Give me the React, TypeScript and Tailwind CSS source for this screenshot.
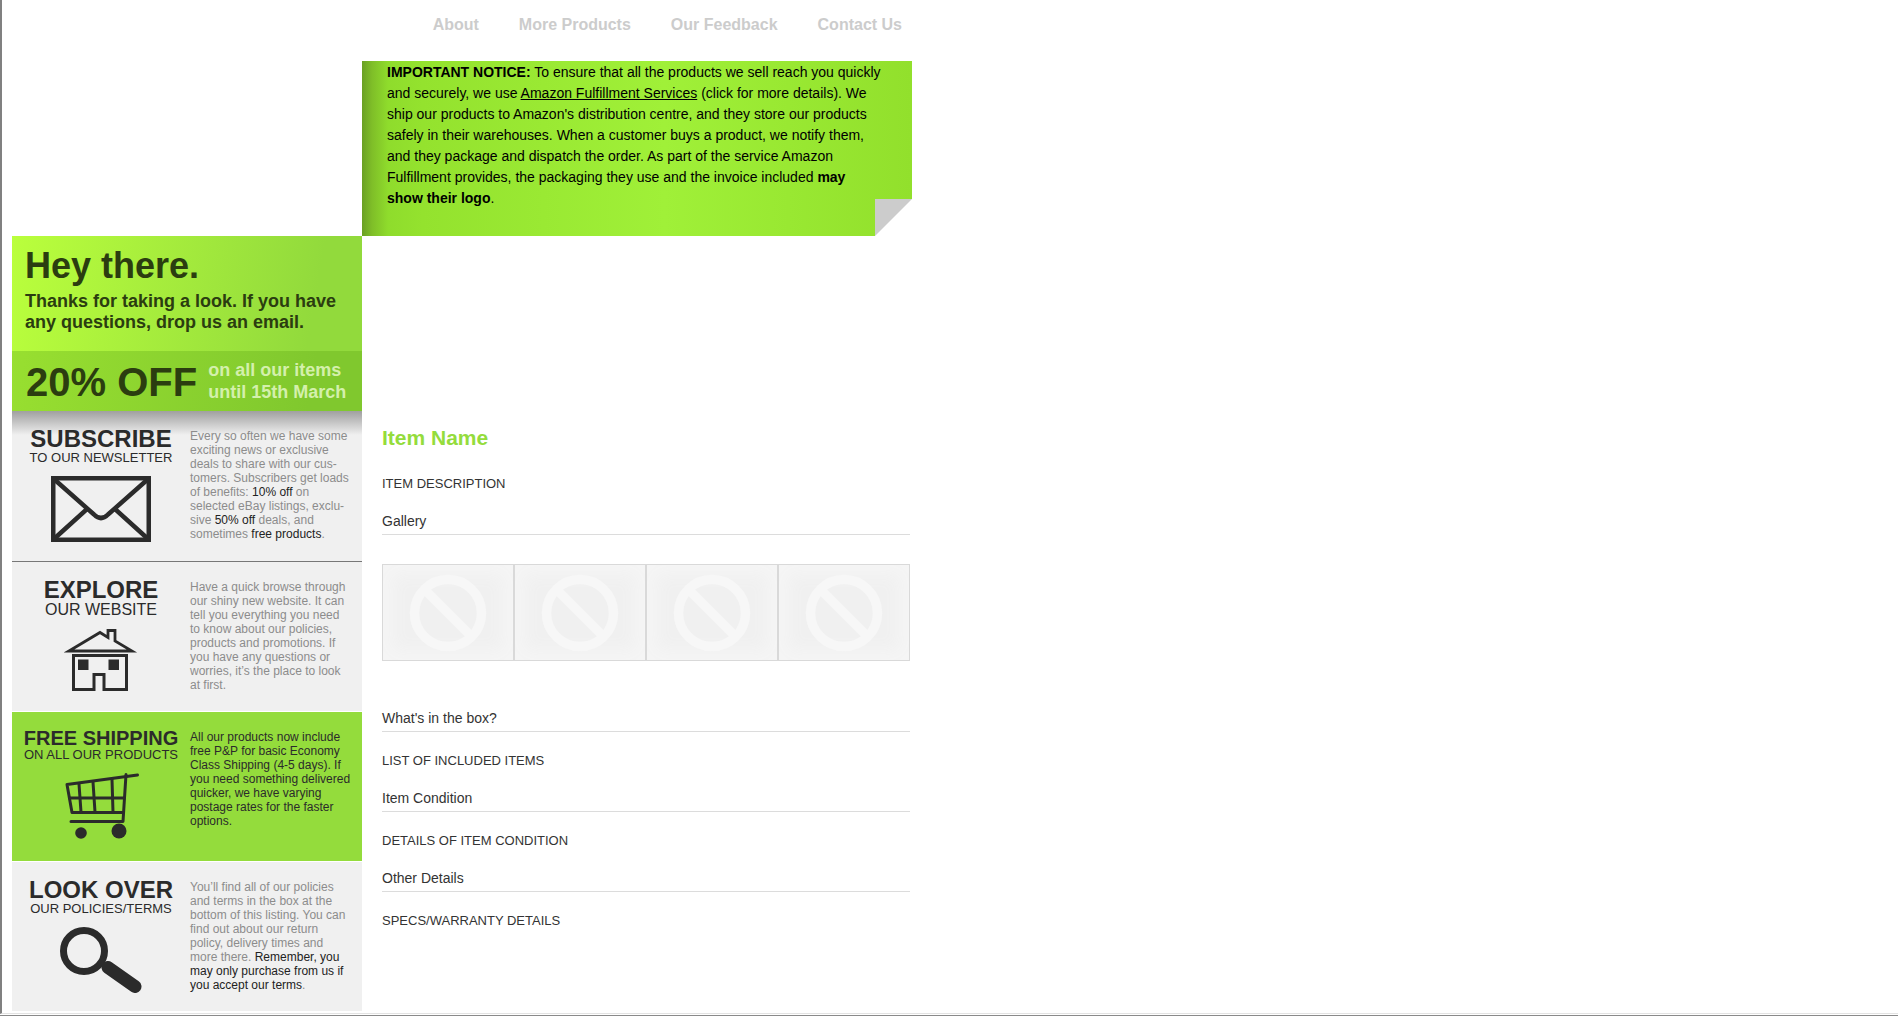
import type { ReactNode } from "react";

const navLinks = ["About", "More Products", "Our Feedback", "Contact Us"];

const sections = [
  { title: "What's in the box?", body: "LIST OF INCLUDED ITEMS" },
  { title: "Item Condition", body: "DETAILS OF ITEM CONDITION" },
  { title: "Other Details", body: "SPECS/WARRANTY DETAILS" },
];

function EnvelopeIcon() {
  return (
    <svg width="100" height="66" viewBox="0 0 100 66" fill="none" stroke="#2b2b2b" aria-hidden="true">
      <rect x="2.25" y="2.25" width="95.5" height="61.5" strokeWidth="4.5" />
      <path d="M4 4 L43 38.5 Q50 45.5 57 38.5 L96 4" strokeWidth="4.5" />
      <path d="M4 62 L36 33 M96 62 L64 33" strokeWidth="4.5" />
    </svg>
  );
}

function HouseIcon() {
  return (
    <svg width="74" height="62" viewBox="0 0 74 62" fill="none" stroke="#2b2b2b" aria-hidden="true">
      <path d="M5 22 L36 3.5 L44 8.5 V1.5 H51 V12 L68 22 Z" strokeWidth="2.8" />
      <path d="M9.5 26.5 H62.5 V60.5 H40 V45.5 H30 V60.5 H9.5 Z" strokeWidth="3" />
      <path d="M14 30.5 H24.5 V41 H14 Z M44.5 30.5 H55 V41 H44.5 Z" fill="#2b2b2b" stroke="none" />
    </svg>
  );
}

function CartIcon() {
  return (
    <svg width="80" height="66" viewBox="-4 0 80 66" fill="none" stroke="#2b2b2b" strokeLinecap="round" strokeLinejoin="round" aria-hidden="true">
      <path d="M72.5 2 L2 11.5 L7 39.5 H58.5" strokeWidth="3" />
      <path d="M61 1.5 L58 48.5 H6" strokeWidth="3" />
      <path d="M14 11 L16 39 M28 9 L30 39 M47 6.5 L48 39 M4.5 25 H59" strokeWidth="3" />
      <circle cx="16" cy="60" r="5.8" fill="#2b2b2b" stroke="none" />
      <circle cx="54" cy="58" r="7.5" fill="#2b2b2b" stroke="none" />
    </svg>
  );
}

function MagnifierIcon() {
  return (
    <svg width="82" height="66" viewBox="0 0 82 66" fill="none" stroke="#2b2b2b" aria-hidden="true">
      <circle cx="24" cy="24" r="20.5" strokeWidth="7" />
      <path d="M48 40.5 L75 59.5" strokeWidth="13" strokeLinecap="round" />
    </svg>
  );
}

type PromoCardProps = {
  title: string;
  subtitle: string;
  titleClass: string;
  subtitleClass: string;
  className: string;
  icon: ReactNode;
  children: ReactNode;
};

function PromoCard({ title, subtitle, titleClass, subtitleClass, className, icon, children }: PromoCardProps) {
  return (
    <section className={`flex border-b text-xs leading-[14px] ${className}`}>
      <div className="flex w-[178px] shrink-0 flex-col items-center pt-[17px] text-[#2b2b2b]">
        <h2 className={`whitespace-nowrap font-bold ${titleClass}`}>{title}</h2>
        <p className={`whitespace-nowrap ${subtitleClass}`}>{subtitle}</p>
        <div className="mt-[10px]">{icon}</div>
      </div>
      <p className="whitespace-nowrap pt-[18px]">{children}</p>
    </section>
  );
}

function PlaceholderImage() {
  return (
    <div className="flex h-[97px] flex-1 items-center justify-center border border-[#d9d9d9] bg-[#f0f0f0] shadow-[inset_0_0_16px_10px_#f5f5f5]">
      <svg width="78" height="78" viewBox="0 0 78 78" fill="none" stroke="#f7f7f7" strokeWidth="9.5" aria-hidden="true">
        <circle cx="39" cy="39" r="33.5" />
        <path d="M16 16 L62 62" />
      </svg>
    </div>
  );
}

function SectionTitle({ children }: { children: ReactNode }) {
  return <h3 className="border-b border-[#dcdcdc] pt-px pb-[3px] text-sm leading-5">{children}</h3>;
}

export default function App() {
  return (
    <div className="min-h-screen border-b border-[#8a8a8a] bg-white pb-px font-['Liberation_Sans',Arial,sans-serif]">
      <div className="flex items-start border-b border-l-2 border-b-[#e3e3e3] border-l-[#808080] pb-px pl-[10px]">
        <aside className="mt-[236px] w-[350px] shrink-0">
          <div className="h-[115px] bg-linear-100 from-[#baff3c] to-[#92da3c] to-85% px-[13px] pt-[9px] font-bold text-[#2b3d10]">
            <h1 className="text-4xl leading-[42px]">Hey there.</h1>
            <p className="whitespace-nowrap pt-1 text-lg leading-[21px]">
              Thanks for taking a look. If you have
              <br />
              any questions, drop us an email.
            </p>
          </div>
          <div className="flex h-[60px] items-center gap-[11px] bg-linear-100 from-[#98df30] to-[#80c82e] to-85% px-[14px] font-bold">
            <strong className="whitespace-nowrap pt-0.5 text-[40px] leading-10 text-[#2b3d10]">20% OFF</strong>
            <p className="whitespace-nowrap text-lg leading-[22px] text-[#d4f0ac]">
              on all our items
              <br />
              until 15th March
            </p>
          </div>

          <PromoCard
            title="SUBSCRIBE"
            subtitle="TO OUR NEWSLETTER"
            titleClass="text-2xl leading-[22px]"
            subtitleClass="text-[13px] leading-4"
            className="h-[151px] border-[#777777] bg-[#f0f0f0] bg-linear-to-b from-[#a0a0a0] to-[#f0f0f0] to-[24px] text-[#8c8c8c]"
            icon={<EnvelopeIcon />}
          >
            Every so often we have some
            <br />
            exciting news or exclusive
            <br />
            deals to share with our cus-
            <br />
            tomers. Subscribers get loads
            <br />
            of benefits: <span className="text-[#222222]">10% off</span> on
            <br />
            selected eBay listings, exclu-
            <br />
            sive <span className="text-[#222222]">50% off</span> deals, and
            <br />
            sometimes <span className="text-[#222222]">free products</span>.
          </PromoCard>

          <PromoCard
            title="EXPLORE"
            subtitle="OUR WEBSITE"
            titleClass="text-2xl leading-[22px]"
            subtitleClass="text-base leading-[18px]"
            className="h-[150px] border-white bg-[#f0f0f0] text-[#8c8c8c]"
            icon={<HouseIcon />}
          >
            Have a quick browse through
            <br />
            our shiny new website. It can
            <br />
            tell you everything you need
            <br />
            to know about our policies,
            <br />
            products and promotions. If
            <br />
            you have any questions or
            <br />
            worries, it’s the place to look
            <br />
            at first.
          </PromoCard>

          <PromoCard
            title="FREE SHIPPING"
            subtitle="ON ALL OUR PRODUCTS"
            titleClass="text-xl leading-[18px]"
            subtitleClass="text-[13px] leading-4"
            className="h-[150px] border-white bg-[#94dc3c] text-[#2b2b2b]"
            icon={<CartIcon />}
          >
            All our products now include
            <br />
            free P&amp;P for basic Economy
            <br />
            Class Shipping (4-5 days). If
            <br />
            you need something delivered
            <br />
            quicker, we have varying
            <br />
            postage rates for the faster
            <br />
            options.
          </PromoCard>

          <PromoCard
            title="LOOK OVER"
            subtitle="OUR POLICIES/TERMS"
            titleClass="text-2xl leading-[22px]"
            subtitleClass="text-[13px] leading-4"
            className="h-[150px] border-white bg-[#f0f0f0] text-[#8c8c8c]"
            icon={<MagnifierIcon />}
          >
            You’ll find all of our policies
            <br />
            and terms in the box at the
            <br />
            bottom of this listing. You can
            <br />
            find out about our return
            <br />
            policy, delivery times and
            <br />
            more there. <span className="text-[#222222]">Remember, you</span>
            <br />
            <span className="text-[#222222]">may only purchase from us if</span>
            <br />
            <span className="text-[#222222]">you accept our terms</span>.
          </PromoCard>
        </aside>

        <main className="w-[550px] shrink-0 text-[#333333]">
          <nav className="flex h-[61px] justify-end gap-10 pr-[10px] pt-[13px] text-base font-bold text-[#cccccc]">
            {navLinks.map((link) => (
              <a key={link} href="#" className="whitespace-nowrap">
                {link}
              </a>
            ))}
          </nav>

          <div className="relative h-[175px] bg-[linear-gradient(to_right,#6aa024_0,#7fbe28_10px,#8fdc2c_26px,#94e22e_60px,#a0f038_55%,#92e02c_100%)] px-[25px] pt-px text-sm leading-[21px] text-black">
            <p>
              <strong>IMPORTANT NOTICE:</strong> To ensure that all the products we sell reach you quickly and securely, we use{" "}
              <a href="#" className="underline">
                Amazon Fulfillment Services
              </a>{" "}
              (click for more details). We ship our products to Amazon's distribution centre, and they store our products safely in their
              warehouses. When a customer buys a product, we notify them, and they package and dispatch the order. As part of the service
              Amazon Fulfillment provides, the packaging they use and the invoice included{" "}
              <strong>
                may
                <br />
                show their logo
              </strong>
              .
            </p>
            {/* folded corner */}
            <svg className="absolute right-0 bottom-0" width="37" height="37" viewBox="0 0 37 37" aria-hidden="true">
              <path d="M0 0 H37 V37 H0 Z" fill="#ffffff" />
              <path d="M0 0 H37 L0 37 Z" fill="#cccccc" />
            </svg>
          </div>

          <div className="pt-[188px] pr-[2px] pl-5">
            <h2 className="text-[21px] font-bold leading-7 text-[#94dc3c]">Item Name</h2>
            <p className="pt-[22px] text-[13px] leading-5">ITEM DESCRIPTION</p>
            <div className="pt-4">
              <SectionTitle>Gallery</SectionTitle>
            </div>
            <div className="mt-[29px] mb-[46px] flex">
              {[1, 2, 3, 4].map((slot) => (
                <PlaceholderImage key={slot} />
              ))}
            </div>
            {sections.map((section) => (
              <section key={section.title} className="pb-4">
                <SectionTitle>{section.title}</SectionTitle>
                <p className="pt-[19px] text-[13px] leading-5">{section.body}</p>
              </section>
            ))}
          </div>
        </main>
      </div>
    </div>
  );
}
